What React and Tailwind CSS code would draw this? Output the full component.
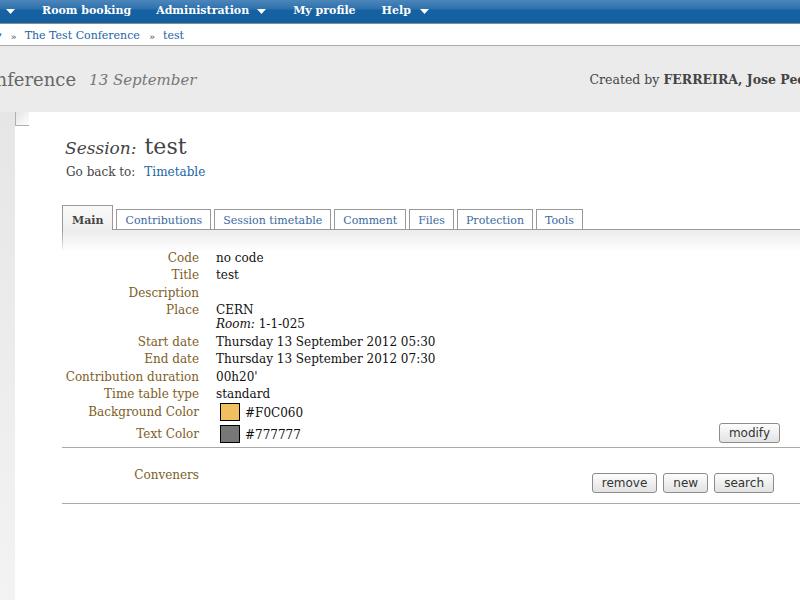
import React from 'react';

const serif = "font-['DejaVu_Serif',serif]";
const sans = "font-['DejaVu_Sans',sans-serif]";

function Caret() {
  return (
    <svg width="9" height="5" viewBox="0 0 9 5" className="inline-block">
      <path d="M0 0 L9 0 L4.5 5 Z" fill="#fff" />
    </svg>
  );
}

function Btn({ children }) {
  return (
    <button
      className={`${sans} h-[20px] px-[9px] text-[12px] leading-none text-[#333] rounded-[3px] border border-[#8c8c8c] bg-gradient-to-b from-[#fdfdfd] to-[#e2e2e2]`}
    >
      {children}
    </button>
  );
}

function Row({ label, children, tall }) {
  return (
    <>
      <div className="text-right text-[#7d5e1f] py-[1.75px] leading-[14px]">{label}</div>
      <div className={`text-[#111] leading-[14px] ${tall ? '' : 'py-[1.75px]'}`}>{children}</div>
    </>
  );
}

const tabs = ['Contributions', 'Session timetable', 'Comment', 'Files', 'Protection', 'Tools'];

export default function App() {
  return (
    <div className={`${serif} w-[800px] h-[600px] overflow-hidden bg-white text-[12px]`}>
      {/* top menu */}
      <div className="h-[24px] border-b border-[#8a8a8a] bg-[linear-gradient(#4c86ba,#2c70ac_9px,#1661a1_10px,#1560a0)] flex items-center text-white font-bold text-[11px] whitespace-nowrap">
        <span className="ml-[6px] flex items-center"><Caret /></span>
        <span className="ml-[27px]">Room booking</span>
        <span className="ml-[25px]">Administration</span>
        <span className="ml-[8px] flex items-center"><Caret /></span>
        <span className="ml-[27px]">My profile</span>
        <span className="ml-[26px]">Help</span>
        <span className="ml-[9px] flex items-center"><Caret /></span>
      </div>

      {/* breadcrumb */}
      <div className="h-[22px] border-b border-[#aaa] flex items-center pt-[3px] whitespace-nowrap text-[11px]">
        <span className="text-[#1a64a3] text-[9px] -ml-[3px]">▾</span>
        <span className="ml-[9px] text-[#555] text-[10px]">»</span>
        <span className="ml-[8px] text-[#1a64a3]">The Test Conference</span>
        <span className="ml-[9px] text-[#555] text-[10px]">»</span>
        <span className="ml-[8px] text-[#1a64a3]">test</span>
      </div>

      {/* conference header */}
      <div className="h-[66px] bg-[#ebebeb] flex items-center whitespace-nowrap">
        <span className="-ml-[29px] text-[18px] text-[#666]">Conference</span>
        <span className="ml-[13px] text-[15px] italic text-[#777] mt-[2px]">13 September</span>
        <span className="ml-auto mr-[-21px] text-[12.5px] text-[#444] mt-[2px]">
          Created by <b>FERREIRA, Jose Pedro</b>
        </span>
      </div>

      {/* body */}
      <div className="flex h-[488px]">
        <div className="w-[15px] bg-gradient-to-b from-[#e6e6e6] to-[#f3f3f3]" />
        <div className="relative flex-1 bg-white pl-[47px] pt-[18px]">
          <div className="absolute left-0 top-0 w-[14px] h-[14px] border-l border-b border-[#b0b0b0] bg-gradient-to-br from-[#e4e4e4] to-white" />

          <div className="flex items-baseline text-[#444] pl-[3px]">
            <span className="italic text-[17px]">Session:</span>
            <span className="ml-[8px] text-[22px]">test</span>
          </div>
          <div className="flex items-baseline mt-[0px] pl-[4px] text-[#444]">
            <span>Go back to:</span>
            <span className="ml-[9px] text-[#1a64a3]">Timetable</span>
          </div>

          {/* tabs */}
          <div className="mt-[24px] flex items-end gap-[3px] border-b border-[#999] h-[25px] text-[11px]">
            <div className="-mb-px h-[25px] px-[9px] border border-b-0 border-[#999] bg-gradient-to-b from-[#fafafa] to-[#efefef] flex items-center pt-[6px] font-bold text-[#444]">
              Main
            </div>
            {tabs.map((t) => (
              <div
                key={t}
                className="h-[20px] px-[8px] pt-[3px] border border-b-0 border-[#999] bg-white flex items-center text-[#3b6aa0]"
              >
                {t}
              </div>
            ))}
          </div>

          {/* tab content */}
          <div className="relative bg-[linear-gradient(#ececec,#fff_22px)] pt-[19px]">
            <div className="absolute left-0 top-0 w-px h-[22px] bg-gradient-to-b from-[#999] to-transparent" />
            <div className="grid grid-cols-[137px_1fr] gap-x-[17px] pr-[20px]">
              <Row label="Code">no code</Row>
              <Row label="Title">test</Row>
              <Row label="Description">&nbsp;</Row>
              <Row label="Place">
                CERN
                <br />
                <i>Room:</i> 1-1-025
              </Row>
              <Row label="Start date">Thursday 13 September 2012 05:30</Row>
              <Row label="End date">Thursday 13 September 2012 07:30</Row>
              <Row label="Contribution duration">00h20'</Row>
              <Row label="Time table type">standard</Row>
              <Row label="Background Color" tall>
                <div className="flex items-center ml-[4px] mb-[4px]">
                  <span className="w-[20px] h-[18px] border border-black bg-[#F0C060]" />
                  <span className="ml-[5px] mt-[2px]">#F0C060</span>
                </div>
              </Row>
              <Row label="Text Color" tall>
                <div className="flex items-start mb-[4px]">
                  <div className="flex items-center ml-[4px]">
                    <span className="w-[20px] h-[18px] border border-black bg-[#777777]" />
                    <span className="ml-[5px] mt-[2px]">#777777</span>
                  </div>
                  <div className="ml-auto -mt-[2px]">
                    <Btn>modify</Btn>
                  </div>
                </div>
              </Row>
            </div>
            <div className="border-t border-[#aaa]" />
            <div className="h-[55px] flex pt-[20px] pr-[26px]">
              <div className="w-[137px] text-right text-[#7d5e1f] leading-[14px]">Conveners</div>
              <div className="ml-auto flex gap-[6px] mt-[5px] h-[20px]">
                <Btn>remove</Btn>
                <Btn>new</Btn>
                <Btn>search</Btn>
              </div>
            </div>
            <div className="border-t border-[#aaa]" />
          </div>
        </div>
      </div>
    </div>
  );
}
